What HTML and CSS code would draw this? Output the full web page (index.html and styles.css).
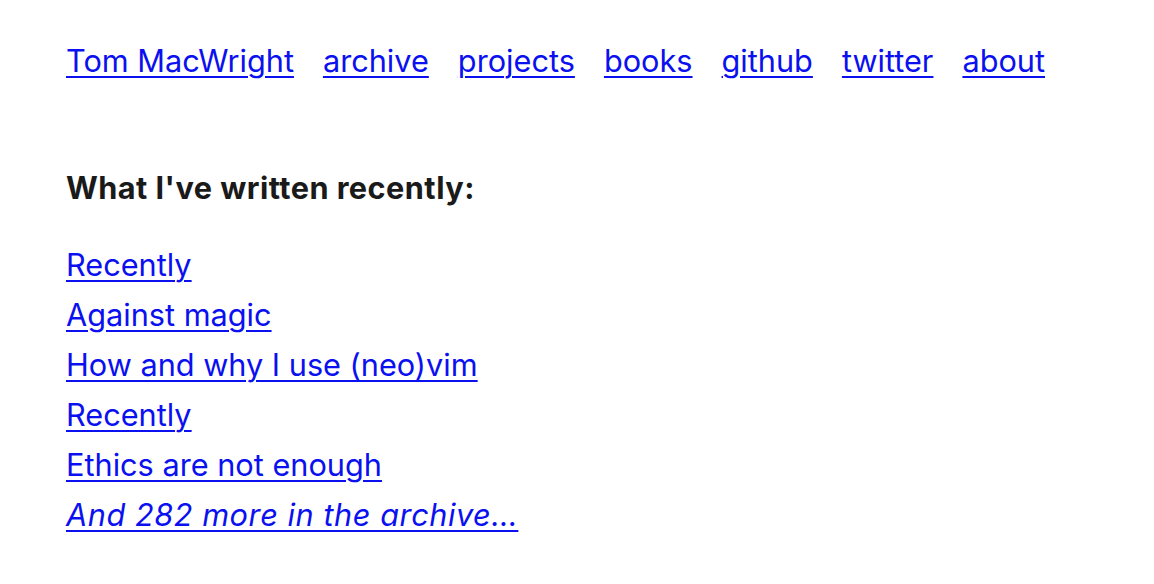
FILE: index.html
```html
<!DOCTYPE html>
<html>
<head>
<meta charset="utf-8">
<link rel="stylesheet" href="styles.css">
</head>
<body>
<nav class="nav">
  <a href="#">Tom MacWright</a>
  <a href="#">archive</a>
  <a href="#">projects</a>
  <a href="#">books</a>
  <a href="#">github</a>
  <a href="#">twitter</a>
  <a href="#">about</a>
</nav>
<main class="main">
  <h2 class="heading">What I've written recently:</h2>
  <ul class="posts">
    <li><a href="#">Recently</a></li>
    <li><a href="#">Against magic</a></li>
    <li><a href="#">How and why I use (neo)vim</a></li>
    <li><a href="#">Recently</a></li>
    <li><a href="#">Ethics are not enough</a></li>
    <li><a href="#" class="more">And 282 more in the archive…</a></li>
  </ul>
</main>
</body>
</html>
```
FILE: styles.css
```css
html, body {
  margin: 0;
  background: #fff;
}
body {
  font-family: Inter, "Noto Sans", sans-serif;
  font-size: 30.7px;
  color: #1a1a1a;
  padding: 36px 66px 0;
}
a {
  color: #0a10f0;
  text-decoration: underline;
  text-decoration-thickness: 2px;
  text-underline-offset: 4px;
}
.nav {
  display: flex;
  gap: 29px;
  line-height: 50px;
}
.main {
  padding-top: 77px;
}
.heading {
  font-size: 30.7px;
  font-weight: 700;
  letter-spacing: 0.45px;
  line-height: 50px;
  margin: 0 0 27px;
}
.posts {
  list-style: none;
  margin: 0;
  padding: 0;
}
.posts li {
  line-height: 50px;
}
.more {
  font-style: italic;
  letter-spacing: 0.55px;
}
```
